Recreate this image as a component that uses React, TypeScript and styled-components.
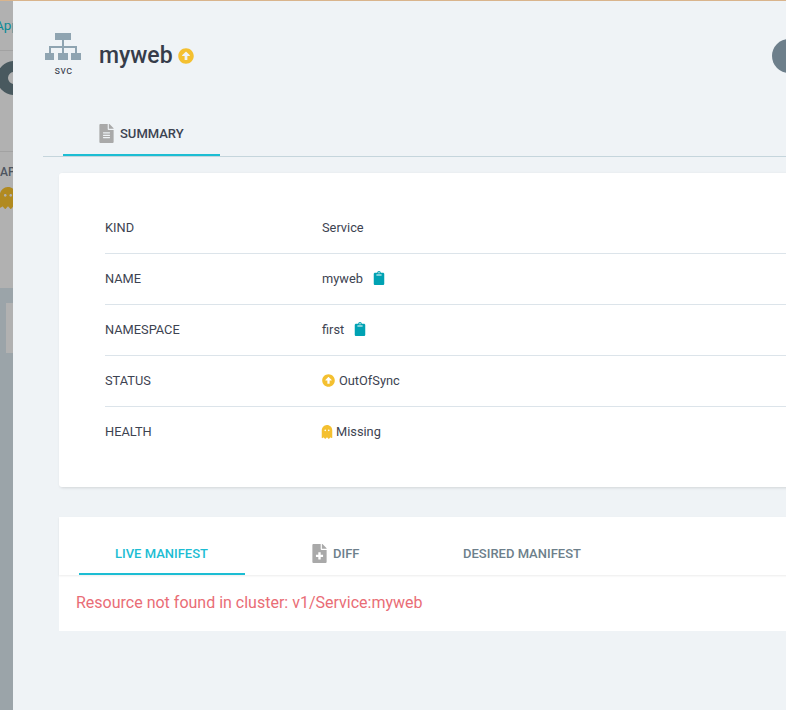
import React from "react";
import styled, { createGlobalStyle } from "styled-components";
import { FaArrowAltCircleUp, FaClipboard, FaFileAlt, FaFileMedical, FaGhost } from "react-icons/fa";

const Global = createGlobalStyle`
  html, body { margin: 0; padding: 0; height: 100%; overflow: hidden; }
  body { font-family: Roboto, "Liberation Sans", sans-serif; color: #3d4351; background: #eff3f6; }
  #root { height: 100%; }
`;

const Page = styled.div`
  display: flex;
  width: 786px;
  height: 710px;
  overflow: hidden;
  border-top: 1px solid #d9b48c;
  box-sizing: border-box;
`;

const Backdrop = styled.div`
  flex: 0 0 13px;
  width: 13px;
  overflow: hidden;
  display: flex;
  flex-direction: column;
  background: #9ba4a9;
`;

const BackdropTop = styled.div`
  height: 287px;
  background: #b1b1b1;
  flex: none;
`;

const BackLink = styled.div`
  height: 50px;
  box-sizing: border-box;
  padding-top: 16px;
  margin-left: -5px;
  width: 30px;
  font-size: 13.5px;
  color: #0b8a96;
  border-bottom: 1px solid #a2a2a2;
`;

const BackRing = styled.div`
  height: 101px;
  box-sizing: border-box;
  padding-top: 10px;
  border-bottom: 1px solid #a2a2a2;
`;

const Ring = styled.div`
  width: 34px;
  height: 34px;
  margin-left: -3px;
  box-sizing: border-box;
  border: 11px solid #49595f;
  border-radius: 50%;
`;

const BackLabel = styled.div`
  margin: 13px 0 0 0;
  font-size: 12px;
  font-weight: 500;
  line-height: 14px;
  color: #4d5560;
`;

const BackGhost = styled.div`
  margin: 8px 0 0 -3px;
  color: #b18a20;
  font-size: 22px;
  line-height: 22px;
`;

const BackCard = styled.div`
  margin: 15px 0 0 6px;
  height: 50px;
  flex: none;
  background: #b1b1b1;
`;

const Panel = styled.div`
  flex: none;
  width: 1100px;
  background: #eff3f6;
  padding: 32px 0 0 30px;
  box-sizing: border-box;
`;

const Header = styled.div`
  display: flex;
  align-items: flex-start;
  height: 83px;
  position: relative;
`;

const KindIcon = styled.div`
  width: 38px;
  display: flex;
  flex-direction: column;
  align-items: center;
  color: #3d4351;
  margin-left: 1px;
`;

const KindLabel = styled.span`
  font-size: 11px;
  line-height: 12px;
  margin: 5px 0 0 1px;
  letter-spacing: 0.5px;
`;

const Title = styled.div`
  display: flex;
  align-items: center;
  gap: 5px;
  margin: 9px 0 0 17px;
  font-size: 23px;
  font-weight: 500;
  line-height: 28px;
  color: #363c4a;
`;

const StatusUp = styled(FaArrowAltCircleUp)<{ $size: number; $gap?: number }>`
  color: #f4c030;
  font-size: ${(p) => p.$size}px;
  margin-right: ${(p) => p.$gap ?? 0}px;
  flex: none;
`;

const ActionDot = styled.div`
  position: absolute;
  left: 729px;
  top: 6px;
  width: 34px;
  height: 34px;
  border-radius: 50%;
  background: #6d7f8b;
`;

const SummaryTabs = styled.div`
  display: flex;
  height: 40px;
  border-bottom: 1px solid #c5d5dc;
  padding-left: 20px;
`;

const SummaryTab = styled.div`
  width: 157px;
  height: 40px;
  box-sizing: border-box;
  border-bottom: 2px solid #1cbdd3;
  display: flex;
  align-items: center;
  gap: 4px;
  padding: 0 0 4px 34px;
  font-size: 13px;
  font-weight: 500;
  color: #3d4351;
`;

const TabIcon = styled.span`
  display: inline-flex;
  color: #a9a9a9;
  font-size: 19px;
`;

const Card = styled.div`
  margin: 16px 0 0 16px;
  background: #fff;
  border-radius: 3px;
  box-shadow: 1px 1px 3px rgba(0, 0, 0, 0.12);
  height: 314px;
  box-sizing: border-box;
  padding: 30px 0 0 46px;
`;

const Row = styled.div<{ $last?: boolean }>`
  display: flex;
  align-items: center;
  height: 51px;
  padding-bottom: 2px;
  box-sizing: border-box;
  border-bottom: ${(p) => (p.$last ? "none" : "1px solid #dce4ea")};
  font-size: 12.8px;
`;

const RowKey = styled.div`
  width: 217px;
  flex: none;
  color: #3d4351;
`;

const RowValue = styled.div`
  display: flex;
  align-items: center;
  color: #3d4351;
`;

const Copy = styled(FaClipboard)`
  color: #00a2b3;
  font-size: 14px;
  margin-left: 9px;
`;

const Missing = styled(FaGhost)`
  color: #f4c030;
  font-size: 14px;
  margin: 0 2px 0 -2px;
`;

const ManifestCard = styled.div`
  margin: 30px 0 0 16px;
  background: #fff;
  height: 114px;
`;

const ManifestTabs = styled.div`
  display: flex;
  height: 58px;
  padding-left: 20px;
  box-shadow: 0 1px 2px rgba(0, 0, 0, 0.08);
`;

const ManifestTab = styled.div<{ $active?: boolean; $width: number; $pad: number }>`
  width: ${(p) => p.$width}px;
  height: 58px;
  box-sizing: border-box;
  padding: 16px 0 0 ${(p) => p.$pad}px;
  display: flex;
  align-items: center;
  gap: 4px;
  font-size: 13px;
  font-weight: 500;
  color: ${(p) => (p.$active ? "#1cbdd3" : "#6d7f8b")};
  border-bottom: 2px solid ${(p) => (p.$active ? "#1cbdd3" : "transparent")};
`;

const ErrorText = styled.div`
  margin: 18px 0 0 17px;
  font-size: 16px;
  line-height: 20px;
  color: #e96d76;
`;

function ServiceIcon() {
  return (
    <svg width="36" height="27" viewBox="0 0 36 27" fill="#8fa4b1" aria-hidden="true">
      <rect x="10" y="0" width="16" height="7" />
      <rect x="17" y="7" width="2" height="13" />
      <rect x="4" y="13" width="28" height="2" />
      <rect x="4" y="13" width="2" height="7" />
      <rect x="30" y="13" width="2" height="7" />
      <rect x="0" y="20" width="9" height="7" />
      <rect x="13" y="20" width="10" height="7" />
      <rect x="26" y="20" width="10" height="7" />
    </svg>
  );
}

export default function App() {
  return (
    <Page>
      <Global />
      <Backdrop>
        <BackdropTop>
          <BackLink>Apps</BackLink>
          <BackRing>
            <Ring />
          </BackRing>
          <BackLabel>APP</BackLabel>
          <BackGhost>
            <FaGhost />
          </BackGhost>
        </BackdropTop>
        <BackCard />
      </Backdrop>
      <Panel>
        <Header>
          <KindIcon>
            <ServiceIcon />
            <KindLabel>svc</KindLabel>
          </KindIcon>
          <Title>
            myweb
            <StatusUp $size={16} />
          </Title>
          <ActionDot />
        </Header>
        <SummaryTabs>
          <SummaryTab>
            <TabIcon>
              <FaFileAlt />
            </TabIcon>
            SUMMARY
          </SummaryTab>
        </SummaryTabs>
        <Card>
          <Row>
            <RowKey>KIND</RowKey>
            <RowValue>Service</RowValue>
          </Row>
          <Row>
            <RowKey>NAME</RowKey>
            <RowValue>
              myweb
              <Copy />
            </RowValue>
          </Row>
          <Row>
            <RowKey>NAMESPACE</RowKey>
            <RowValue>
              first
              <Copy />
            </RowValue>
          </Row>
          <Row>
            <RowKey>STATUS</RowKey>
            <RowValue>
              <StatusUp $size={13} $gap={4} />
              OutOfSync
            </RowValue>
          </Row>
          <Row $last>
            <RowKey>HEALTH</RowKey>
            <RowValue>
              <Missing />
              Missing
            </RowValue>
          </Row>
        </Card>
        <ManifestCard>
          <ManifestTabs>
            <ManifestTab $active $width={166} $pad={36}>
              LIVE MANIFEST
            </ManifestTab>
            <ManifestTab $width={184} $pad={65}>
              <TabIcon>
                <FaFileMedical />
              </TabIcon>
              DIFF
            </ManifestTab>
            <ManifestTab $width={200} $pad={34}>
              DESIRED MANIFEST
            </ManifestTab>
          </ManifestTabs>
          <ErrorText>Resource not found in cluster: v1/Service:myweb</ErrorText>
        </ManifestCard>
      </Panel>
    </Page>
  );
}
